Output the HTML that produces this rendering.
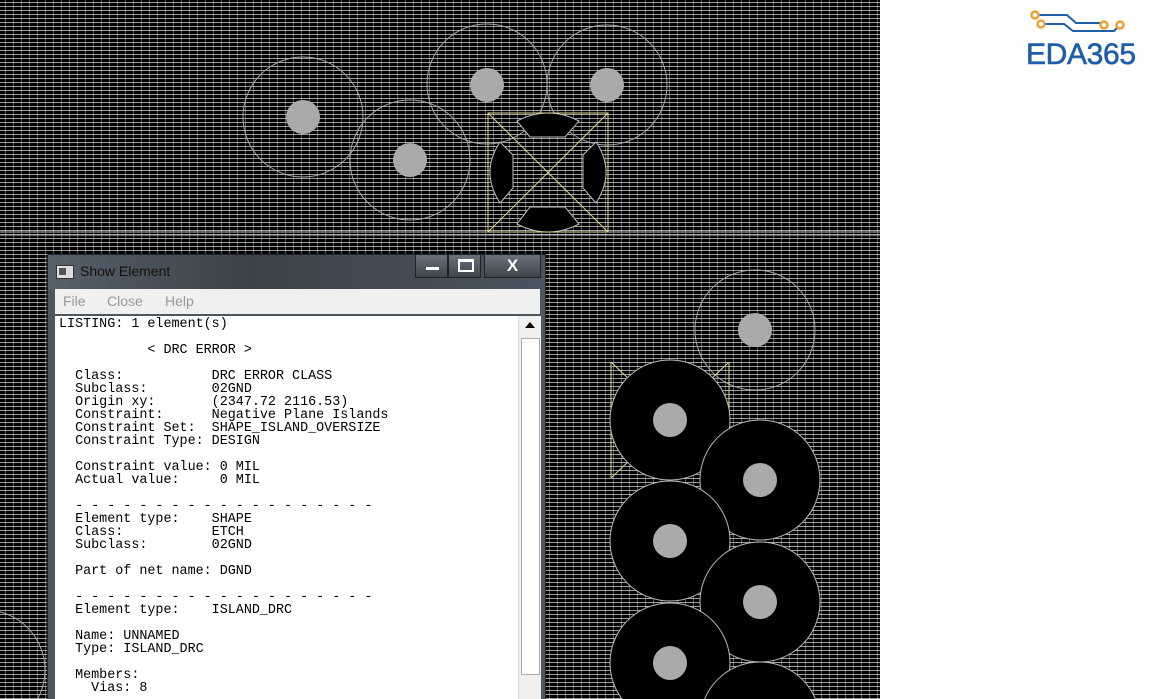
<!DOCTYPE html>
<html style="overflow:hidden"><head><meta charset="utf-8"><style>
html,body{margin:0;width:1152px;height:699px;overflow:hidden}
body{background:#fff;position:relative;font-family:"Liberation Sans",sans-serif}
#pcb{position:absolute;left:0;top:0;width:880px;height:699px;background:repeating-linear-gradient(to bottom,#000 0,#000 2px,#9a9a9a 2px,#9a9a9a 3px,#000 3px,#000 4px)}
#pcb2{position:absolute;left:0;top:0;width:880px;height:699px;background:repeating-linear-gradient(to right,transparent 0,transparent 5px,rgba(255,255,255,.35) 5px,rgba(255,255,255,.35) 6px,transparent 6px,transparent 8px)}
svg{position:absolute;left:0;top:0;overflow:hidden}
#win{position:absolute;left:47px;top:254px;width:499px;height:445px;background:#4f565d;border:1px solid #22272b;border-bottom:none;box-sizing:border-box;overflow:hidden}
#title{position:absolute;left:0;top:0;width:100%;height:34px;background:linear-gradient(90deg,#55606a,#3b4249 40%,#4a5460)}
#title .t{position:absolute;left:32px;top:8px;font-size:14px;color:#111}
#title .ic{position:absolute;left:8px;top:10px;width:16px;height:12px;background:#ddd;border:1px solid #333}
#title .ic:after{content:"";position:absolute;left:2px;top:2px;width:7px;height:7px;background:#555}
.btn{position:absolute;top:0;height:23px;border:1px solid #222;border-top:none;background:linear-gradient(#6a737c,#3c444c);color:#fff;text-align:center;font-weight:bold;box-sizing:border-box}
#menu{position:absolute;left:7px;top:34px;width:485px;height:25px;background:#f0f0f0;font-size:14px;color:#999}
#menu span{position:absolute;top:4px}
#txt{position:absolute;left:7px;top:61px;width:463px;height:384px;background:#fff;overflow:hidden}
pre{margin:0;position:absolute;left:4px;top:2px;font-family:"Liberation Mono",monospace;font-size:13.4px;line-height:13px;color:#000}
#sb{position:absolute;left:470px;top:61px;width:22px;height:384px;background:#f0f0f0;border-left:1px solid #ddd}
#thumb{position:absolute;left:2px;top:22px;width:17px;height:335px;background:#fff;border:1px solid #aaa}
</style></head><body>
<div id="pcb"></div><div id="pcb2"></div>
<svg width="880" height="699">
<g fill="none" stroke="#a8a8a8" stroke-width="1">
<circle cx="303" cy="117" r="60"/><circle cx="410" cy="160" r="60"/><circle cx="487" cy="84" r="60"/><circle cx="607" cy="85" r="60"/><circle cx="755" cy="330" r="60"/><circle cx="-15" cy="670" r="60"/>
</g>
<line x1="0" y1="232" x2="880" y2="232" stroke="#bbb"/><line x1="0" y1="235" x2="880" y2="235" stroke="#bbb"/>
<g fill="#aaa"><circle cx="303" cy="117" r="17"/><circle cx="410" cy="160" r="17"/><circle cx="487" cy="85" r="17"/><circle cx="607" cy="85" r="17"/><circle cx="755" cy="330" r="17"/></g>
<g fill="#000" stroke="#bbb" stroke-width="1">
<path d="M517 121 Q548 105 579 121 L565 137 L530 137 Z"/>
<path d="M517 224 Q548 240 579 224 L565 207 L530 207 Z"/>
<path d="M500 142 L513 155 L513 188 L500 203 Q480 172 500 142 Z"/>
<path d="M596 142 L583 155 L583 188 L596 203 Q616 172 596 142 Z"/>
</g>
<g stroke="#d8d890" fill="none"><rect x="488" y="113" width="120" height="119"/><line x1="488" y1="113" x2="608" y2="232"/><line x1="608" y1="113" x2="488" y2="232"/>
<path d="M611 362 V478 M729 362 V420 M611 362 L630 380 M729 362 L710 380 M611 478 L630 460"/></g>
<g fill="#000" stroke="#bbb"><circle cx="670" cy="420" r="60"/><circle cx="760" cy="480" r="60"/><circle cx="670" cy="541" r="60"/><circle cx="760" cy="602" r="60"/><circle cx="670" cy="663" r="60"/><circle cx="760" cy="722" r="60"/></g>
<g fill="#aaa"><circle cx="670" cy="420" r="17"/><circle cx="760" cy="480" r="17"/><circle cx="670" cy="541" r="17"/><circle cx="760" cy="602" r="17"/><circle cx="670" cy="663" r="17"/></g>
</svg>
<svg width="1152" height="80" style="left:0;top:0">
<g stroke="#1f5ea8" stroke-width="2" fill="none"><path d="M1039 15 H1067 L1076 23 H1100"/><path d="M1045 24 H1064 L1073 31 H1114 L1118 27"/></g>
<g stroke="#f0a030" stroke-width="2.5" fill="#fff"><circle cx="1035" cy="15" r="3.5"/><circle cx="1041" cy="24" r="3.5"/><circle cx="1104" cy="25" r="3.5"/><circle cx="1120" cy="25" r="3.5"/></g>
<text x="1026" y="64" font-family="Liberation Sans,sans-serif" font-size="30" fill="#1f5ea8" stroke="#1f5ea8" stroke-width="0.6" textLength="110">EDA365</text>
</svg>
<div id="win">
<div id="title"><div class="ic"></div><div class="t">Show Element</div></div>
<div class="btn" style="left:367px;width:33px"><div style="position:absolute;left:10px;top:12px;width:13px;height:3px;background:#fff"></div></div>
<div class="btn" style="left:400px;width:33px"><div style="position:absolute;left:9px;top:4px;width:12px;height:8px;border:2px solid #fff;border-top-width:3px"></div></div>
<div class="btn" style="left:436px;width:57px;font-size:17px;line-height:22px">X</div>
<div id="menu"><span style="left:8px">File</span><span style="left:52px">Close</span><span style="left:110px">Help</span></div>
<div id="txt"><pre>LISTING: 1 element(s)

           &lt; DRC ERROR &gt;

  Class:           DRC ERROR CLASS
  Subclass:        02GND
  Origin xy:       (2347.72 2116.53)
  Constraint:      Negative Plane Islands
  Constraint Set:  SHAPE_ISLAND_OVERSIZE
  Constraint Type: DESIGN

  Constraint value: 0 MIL
  Actual value:     0 MIL

  - - - - - - - - - - - - - - - - - - -
  Element type:    SHAPE
  Class:           ETCH
  Subclass:        02GND

  Part of net name: DGND

  - - - - - - - - - - - - - - - - - - -
  Element type:    ISLAND_DRC

  Name: UNNAMED
  Type: ISLAND_DRC

  Members:
    Vias: 8</pre></div>
<div id="sb"><div style="position:absolute;left:6px;top:6px;width:0;height:0;border-left:5px solid transparent;border-right:5px solid transparent;border-bottom:6px solid #000"></div><div id="thumb"></div></div>
</div>
</body></html>
